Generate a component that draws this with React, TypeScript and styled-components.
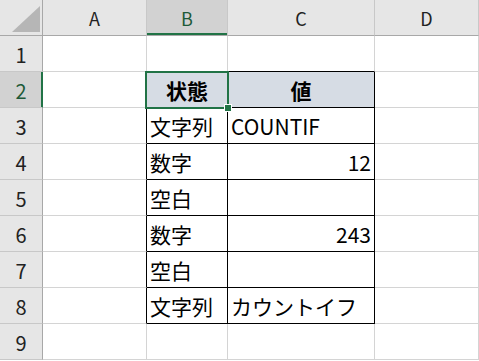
import React from "react";
import styled, { createGlobalStyle, css } from "styled-components";

const GREEN = "#217346";
const GRID = "#d4d4d4";
const BLACK = "#000000";

const Global = createGlobalStyle`
  html, body { margin: 0; padding: 0; background: #ffffff; }
  body { font-family: "Noto Sans CJK JP", "Noto Sans", sans-serif; }
`;

const Sheet = styled.div`
  display: grid;
  grid-template-columns: 43px 104px 81px 147px 1fr;
  grid-auto-rows: 36px;
  width: 479px;
  height: 361px;
  overflow: hidden;
  background: #ffffff;
`;

const Corner = styled.div`
  position: relative;
  background: #e6e6e6;
  border-right: 1px solid #a8a8a8;
  border-bottom: 1px solid #a8a8a8;
`;

const CornerTriangle = styled.div`
  position: absolute;
  left: 12px;
  top: 6px;
  width: 28px;
  height: 26px;
  background: #b6b6b6;
  clip-path: polygon(100% 0, 100% 100%, 0 100%);
`;

const ColHeader = styled.div<{ $active?: boolean }>`
  display: flex;
  align-items: center;
  justify-content: center;
  background: #e6e6e6;
  border-right: 1px solid #c8c8c8;
  border-bottom: 1px solid #a8a8a8;
  font-size: 18px;
  color: #222222;
  ${(p) =>
    p.$active &&
    css`
      background: #d2d2d2;
      color: #1e5a38;
      box-shadow: inset 0 -2px 0 ${GREEN};
    `}
`;

const RowHeader = styled.div<{ $active?: boolean }>`
  display: flex;
  align-items: center;
  justify-content: center;
  background: #e6e6e6;
  border-right: 1px solid #a8a8a8;
  border-bottom: 1px solid #c8c8c8;
  font-size: 20px;
  color: #222222;
  padding-top: 1px;
  box-sizing: border-box;
  ${(p) =>
    p.$active &&
    css`
      background: #d2d2d2;
      color: #1e5a38;
      box-shadow: inset -1px 0 0 ${GREEN};
      border-right-color: ${GREEN};
    `}
`;

const Cell = styled.div<{
  $right?: string;
  $bottom?: string;
  $fill?: string;
  $align?: "left" | "right" | "center";
  $bold?: boolean;
}>`
  position: relative;
  display: flex;
  align-items: center;
  justify-content: ${(p) =>
    p.$align === "right" ? "flex-end" : p.$align === "center" ? "center" : "flex-start"};
  padding: 1px 3px 0 3px;
  box-sizing: border-box;
  background: ${(p) => p.$fill ?? "#ffffff"};
  border-right: 1px solid ${(p) => p.$right ?? GRID};
  border-bottom: 1px solid ${(p) => p.$bottom ?? GRID};
  font-size: 21px;
  font-weight: ${(p) => (p.$bold ? 700 : 400)};
  color: #000000;
  white-space: nowrap;
`;

const Selection = styled.div`
  position: absolute;
  z-index: 5;
  left: -2px;
  top: -1px;
  right: -2px;
  bottom: -2px;
  border: 2px solid ${GREEN};
  pointer-events: none;
`;

const FillHandle = styled.div`
  position: absolute;
  right: -5px;
  bottom: -5px;
  width: 6px;
  height: 6px;
  background: ${GREEN};
  border: 1px solid #ffffff;
`;

type Row = { b?: string; c?: string; cAlign?: "left" | "right" };

const rows: Row[] = [
  {},
  { b: "状態", c: "値" },
  { b: "文字列", c: "COUNTIF", cAlign: "left" },
  { b: "数字", c: "12", cAlign: "right" },
  { b: "空白", c: "" },
  { b: "数字", c: "243", cAlign: "right" },
  { b: "空白", c: "" },
  { b: "文字列", c: "カウントイフ", cAlign: "left" },
  {},
];

export default function App() {
  return (
    <>
      <Global />
      <Sheet>
        <Corner>
          <CornerTriangle />
        </Corner>
        <ColHeader>A</ColHeader>
        <ColHeader $active>B</ColHeader>
        <ColHeader>C</ColHeader>
        <ColHeader>D</ColHeader>

        {rows.map((r, i) => {
          const n = i + 1;
          const inTable = n >= 2 && n <= 8;
          const isHead = n === 2;
          const aboveTable = n === 1;
          const fill = isHead ? "#d6dce4" : undefined;
          return (
            <React.Fragment key={n}>
              <RowHeader $active={isHead}>{n}</RowHeader>
              <Cell $right={inTable ? BLACK : undefined} />
              <Cell
                $right={inTable ? BLACK : undefined}
                $bottom={inTable || aboveTable ? BLACK : undefined}
                $fill={fill}
                $align={isHead ? "center" : "left"}
                $bold={isHead}
              >
                {r.b}
                {isHead && (
                  <Selection>
                    <FillHandle />
                  </Selection>
                )}
              </Cell>
              <Cell
                $right={inTable ? BLACK : undefined}
                $bottom={inTable || aboveTable ? BLACK : undefined}
                $fill={fill}
                $align={isHead ? "center" : r.cAlign ?? "left"}
                $bold={isHead}
              >
                {r.c}
              </Cell>
              <Cell />
            </React.Fragment>
          );
        })}
      </Sheet>
    </>
  );
}
